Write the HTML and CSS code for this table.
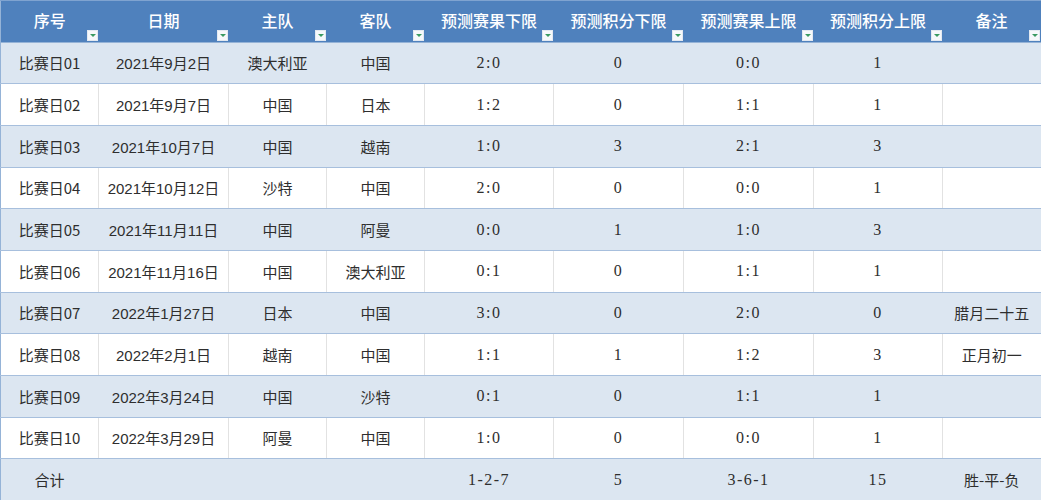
FILE: index.html
```html
<!DOCTYPE html>
<html lang="zh-CN">
<head>
<meta charset="utf-8">
<title>预测赛果</title>
<link rel="stylesheet" href="styles.css">
</head>
<body>
<table class="sheet">
  <colgroup>
    <col class="c98"><col class="c130"><col class="c98"><col class="c98"><col class="c129"><col class="c130"><col class="c130"><col class="c129"><col class="c99">
  </colgroup>
  <thead>
    <tr>
      <th>序号<span class="filter"></span></th>
      <th>日期<span class="filter"></span></th>
      <th>主队<span class="filter"></span></th>
      <th>客队<span class="filter"></span></th>
      <th>预测赛果下限<span class="filter"></span></th>
      <th>预测积分下限<span class="filter"></span></th>
      <th>预测赛果上限<span class="filter"></span></th>
      <th>预测积分上限<span class="filter"></span></th>
      <th>备注<span class="filter"></span></th>
    </tr>
  </thead>
  <tbody>
    <tr class="band"><td>比赛日01</td><td class="date">2021年9月2日</td><td>澳大利亚</td><td>中国</td><td class="num">2:0</td><td class="num">0</td><td class="num">0:0</td><td class="num">1</td><td></td></tr>
    <tr><td>比赛日02</td><td class="date">2021年9月7日</td><td>中国</td><td>日本</td><td class="num">1:2</td><td class="num">0</td><td class="num">1:1</td><td class="num">1</td><td></td></tr>
    <tr class="band"><td>比赛日03</td><td class="date">2021年10月7日</td><td>中国</td><td>越南</td><td class="num">1:0</td><td class="num">3</td><td class="num">2:1</td><td class="num">3</td><td></td></tr>
    <tr><td>比赛日04</td><td class="date">2021年10月12日</td><td>沙特</td><td>中国</td><td class="num">2:0</td><td class="num">0</td><td class="num">0:0</td><td class="num">1</td><td></td></tr>
    <tr class="band"><td>比赛日05</td><td class="date">2021年11月11日</td><td>中国</td><td>阿曼</td><td class="num">0:0</td><td class="num">1</td><td class="num">1:0</td><td class="num">3</td><td></td></tr>
    <tr><td>比赛日06</td><td class="date">2021年11月16日</td><td>中国</td><td>澳大利亚</td><td class="num">0:1</td><td class="num">0</td><td class="num">1:1</td><td class="num">1</td><td></td></tr>
    <tr class="band"><td>比赛日07</td><td class="date">2022年1月27日</td><td>日本</td><td>中国</td><td class="num">3:0</td><td class="num">0</td><td class="num">2:0</td><td class="num">0</td><td>腊月二十五</td></tr>
    <tr><td>比赛日08</td><td class="date">2022年2月1日</td><td>越南</td><td>中国</td><td class="num">1:1</td><td class="num">1</td><td class="num">1:2</td><td class="num">3</td><td>正月初一</td></tr>
    <tr class="band"><td>比赛日09</td><td class="date">2022年3月24日</td><td>中国</td><td>沙特</td><td class="num">0:1</td><td class="num">0</td><td class="num">1:1</td><td class="num">1</td><td></td></tr>
    <tr><td>比赛日10</td><td class="date">2022年3月29日</td><td>阿曼</td><td>中国</td><td class="num">1:0</td><td class="num">0</td><td class="num">0:0</td><td class="num">1</td><td></td></tr>
  </tbody>
  <tfoot>
    <tr class="band"><td>合计</td><td></td><td></td><td></td><td class="num">1-2-7</td><td class="num">5</td><td class="num">3-6-1</td><td class="num">15</td><td>胜-平-负</td></tr>
  </tfoot>
</table>
</body>
</html>
```

FILE: styles.css
```css
html, body {
  margin: 0;
  padding: 0;
  background: #ffffff;
}

.sheet {
  width: 1041px;
  height: 500px;
  table-layout: fixed;
  border-collapse: collapse;
  font-family: "Noto Sans CJK SC", "Noto Sans", sans-serif;
  font-size: 15px;
  color: #2e2e2e;
}

.c98 { width: 98px; }
.c99 { width: 99px; }
.c129 { width: 129px; }
.c130 { width: 130px; }

.sheet tr {
  height: 41.67px;
}

.sheet th {
  position: relative;
  background: #4f81bd;
  color: #ffffff;
  font-size: 16px;
  font-weight: 500;
  text-align: center;
  vertical-align: middle;
  padding: 0 0 3px 0;
  border-top: 1px solid #7fa3d0;
  border-bottom: 1px solid #95b3d7;
}

.sheet th:first-child { border-left: 1px solid #95b3d7; }
.sheet th:last-child { border-right: 2px solid #95b3d7; }

.filter {
  position: absolute;
  right: 1px;
  bottom: 1px;
  width: 11px;
  height: 11px;
  background: #f6f8fb;
  box-sizing: border-box;
  border: 1px solid #e3e9f1;
}

.filter::after {
  content: "";
  position: absolute;
  left: 2px;
  top: 3px;
  border-left: 3px solid transparent;
  border-right: 3px solid transparent;
  border-top: 3px solid #3a9a62;
}

.sheet td {
  text-align: center;
  vertical-align: middle;
  padding: 0;
  white-space: nowrap;
  border-bottom: 1px solid #a7bfdd;
  border-left: 1px solid #e2e2e2;
}

.sheet td:first-child { border-left: 1px solid #95b3d7; }
.sheet td:last-child { border-right: 2px solid #95b3d7; }

.sheet tr.band td {
  background: #dce6f1;
  border-left-color: #dce6f1;
}

.sheet tr.band td:first-child { border-left-color: #95b3d7; }

.date {
  font-family: "Liberation Sans", "Noto Sans CJK SC", sans-serif;
  font-size: 15px;
}

.num {
  font-family: "Liberation Serif", "Noto Sans CJK SC", serif;
  font-size: 16px;
  letter-spacing: 1.5px;
}
```
